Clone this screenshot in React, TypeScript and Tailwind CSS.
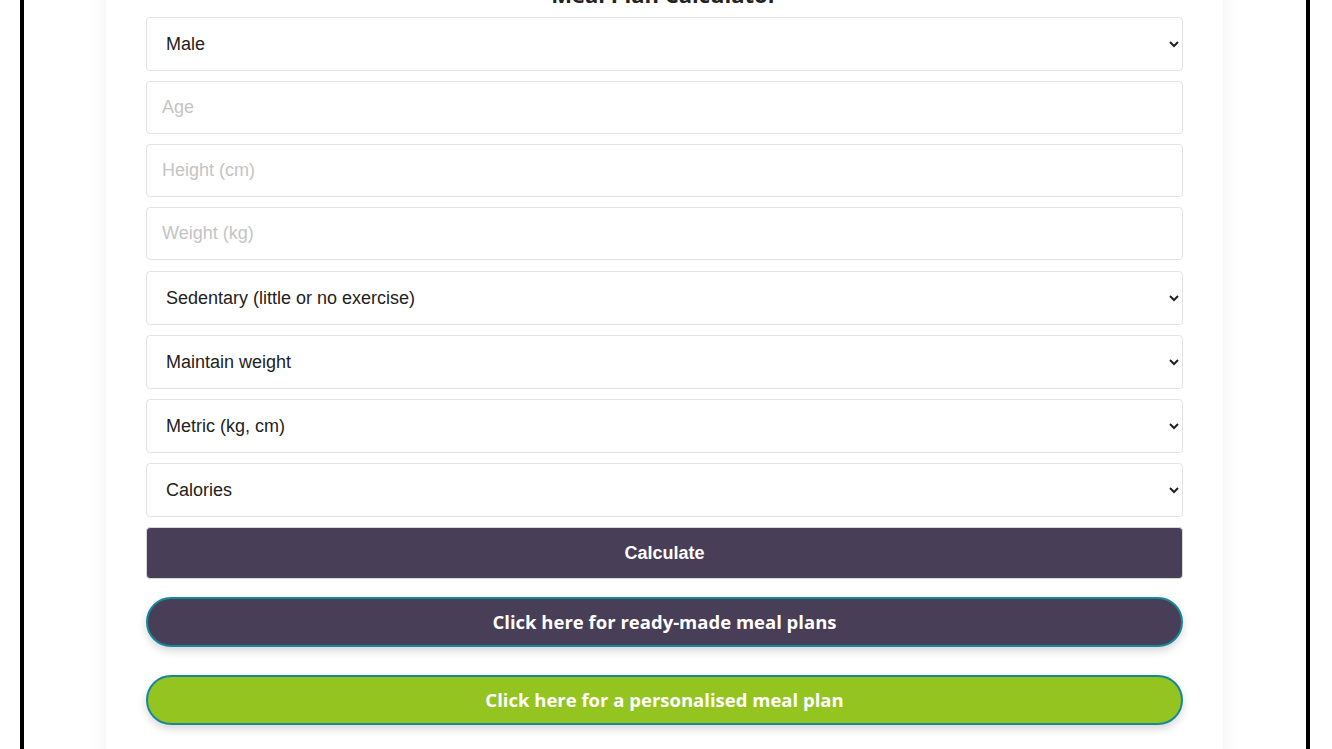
import React from 'react';

const fieldBase =
  'block w-full border border-[#e3e3e3] rounded-[4px] bg-white text-[18px] text-[#222] outline-none font-["Liberation_Sans",Arial,sans-serif]';

const selects: { name: string; options: string[] }[] = [
  { name: 'activity', options: ['Sedentary (little or no exercise)', 'Lightly active', 'Moderately active', 'Very active'] },
  { name: 'goal', options: ['Maintain weight', 'Lose weight', 'Gain weight'] },
  { name: 'units', options: ['Metric (kg, cm)', 'Imperial (lb, in)'] },
  { name: 'output', options: ['Calories', 'Macros'] },
];

const App: React.FC = () => {
  return (
    <div className="min-h-screen bg-white overflow-hidden">
      <div className="ml-5 w-[1290px] min-h-screen border-x-4 border-black">
        <div className="ml-[82px] w-[1117px] min-h-[800px] -mt-[17px] bg-white px-10 shadow-[0_0_18px_rgba(0,0,0,0.07)]">
          <h2 className="text-center text-[22px] leading-[22px] font-bold text-[#222] font-['Open_Sans',sans-serif] mb-[12px]">
            Meal Plan Calculator
          </h2>

          <form onSubmit={(e) => e.preventDefault()} className="flex flex-col">
            <select name="gender" defaultValue="Male" className={`${fieldBase} h-[54px] pl-[15px] pr-[4px] mb-[10px]`}>
              <option>Male</option>
              <option>Female</option>
            </select>

            <input type="number" name="age" placeholder="Age" className={`${fieldBase} h-[53px] px-[15px] mb-[10px] placeholder:text-[#c4c4c4]`} />
            <input type="number" name="height" placeholder="Height (cm)" className={`${fieldBase} h-[53px] px-[15px] mb-[10px] placeholder:text-[#c4c4c4]`} />
            <input type="number" name="weight" placeholder="Weight (kg)" className={`${fieldBase} h-[53px] px-[15px] mb-[11px] placeholder:text-[#c4c4c4]`} />

            {selects.map((s) => (
              <select key={s.name} name={s.name} className={`${fieldBase} h-[54px] pl-[15px] pr-[4px] mb-[10px]`}>
                {s.options.map((o) => (
                  <option key={o}>{o}</option>
                ))}
              </select>
            ))}

            <button
              type="submit"
              className="h-[52px] w-full rounded-[4px] border border-[#d8d8d8] bg-[#483e57] text-white text-[18px] font-bold font-['Liberation_Sans',Arial,sans-serif]"
            >
              Calculate
            </button>
          </form>

          <button className="mt-[18px] h-[50px] w-full rounded-full border-2 border-[#17889a] bg-[#483e57] text-white text-[18.5px] font-bold font-['Open_Sans',sans-serif] shadow-[0_4px_8px_rgba(0,0,0,0.16)]">
            Click here for ready-made meal plans
          </button>

          <button className="mt-[28px] h-[50px] w-full rounded-full border-2 border-[#17889a] bg-[#94c420] text-white text-[18.5px] font-bold font-['Open_Sans',sans-serif] shadow-[0_4px_8px_rgba(0,0,0,0.16)]">
            Click here for a personalised meal plan
          </button>
        </div>
      </div>
    </div>
  );
};

export default App;
